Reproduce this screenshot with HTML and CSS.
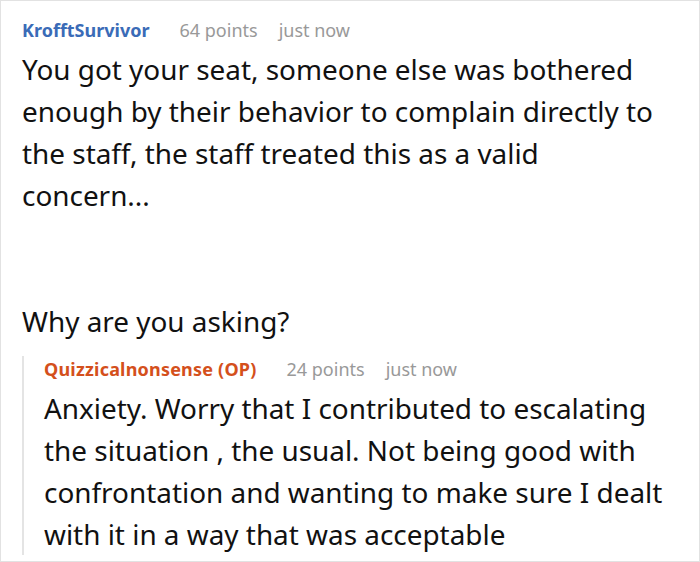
FILE: index.html
```html
<!DOCTYPE html>
<html>
<head>
<meta charset="utf-8">
<link rel="stylesheet" href="styles.css">
</head>
<body>
<div class="frame">
  <div class="comment">
    <div class="meta">
      <span class="user op-blue">KrofftSurvivor</span>
      <span class="points">64 points</span>
      <span class="time">just now</span>
    </div>
    <p class="text">You got your seat, someone else was bothered enough by their behavior to complain directly to the staff, the staff treated this as a valid concern...</p>
    <p class="text gap">Why are you asking?</p>
    <div class="reply">
      <div class="meta">
        <span class="user op-orange">Quizzicalnonsense (OP)</span>
        <span class="points">24 points</span>
        <span class="time">just now</span>
      </div>
      <p class="text">Anxiety. Worry that I contributed to escalating the situation , the usual. Not being good with confrontation and wanting to make sure I dealt with it in a way that was acceptable</p>
    </div>
  </div>
</div>
</body>
</html>
```
FILE: styles.css
```css
html, body {
  margin: 0;
  padding: 0;
  background: #fff;
}
.frame {
  width: 700px;
  height: 562px;
  box-sizing: border-box;
  border: 1px solid #e2e2e2;
  overflow: hidden;
  font-family: "Noto Sans", sans-serif;
  color: #111;
}
.comment {
  padding: 16px 32px 0 21px;
}
.meta {
  font-size: 18px;
  line-height: 26px;
  margin-bottom: 5px;
  display: flex;
  gap: 21px;
}
.user {
  font-weight: 700;
  margin-right: 9px;
}
.op-blue { color: #3a6bb7; }
.op-orange {
  color: #d4501c;
  letter-spacing: 0.2px;
}
.points, .time { color: #999; }
.text {
  margin: 0;
  font-size: 27.9px;
  line-height: 42px;
}
.gap {
  margin-top: 84px;
}
.reply {
  margin-top: 26px;
  border-left: 2px solid #e4e4e4;
  padding-left: 20px;
}
.reply .meta {
  margin-top: -12px;
}
.reply .text {
  margin-bottom: -12px;
}
```
